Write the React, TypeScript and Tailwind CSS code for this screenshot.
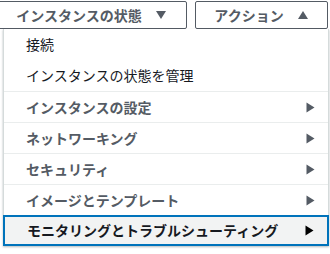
import React from "react";

const Caret = ({ up = false, className = "" }: { up?: boolean; className?: string }) => (
  <svg width="12" height="10" viewBox="0 0 12 10" className={className}>
    {up ? <path d="M6 1 L11 9 L1 9 Z" fill="currentColor" /> : <path d="M1 1 L11 1 L6 9 Z" fill="currentColor" />}
  </svg>
);

const RightArrow = ({ className = "" }: { className?: string }) => (
  <svg width="9" height="11" viewBox="0 0 9 11" className={className}>
    <path d="M0.5 0.5 L8.5 5.5 L0.5 10.5 Z" fill="currentColor" />
  </svg>
);

const App = () => {
  const subMenus = [
    "インスタンスの設定",
    "ネットワーキング",
    "セキュリティ",
    "イメージとテンプレート",
  ];

  return (
    <div
      className="relative h-[254px] w-[330px] overflow-hidden bg-white"
      style={{ fontFamily: '"Noto Sans CJK JP", "Noto Sans", sans-serif' }}
    >
      {/* Background table peeking out on the left */}
      <div className="absolute left-[-8px] top-[75px] flex flex-col text-[12px] leading-[14px] text-[#16191f]">
        <span className="h-[22px]">.</span>
        <span className="h-[38px]">2</span>
        <span className="h-[22px]">4</span>
        <span className="h-[24px]">2</span>
        <span className="h-[20px]">1</span>
      </div>

      {/* Buttons */}
      <div className="flex gap-[8px] pt-px">
        <button className="ml-[-4px] flex h-[28px] w-[191px] items-center justify-center gap-[13px] rounded-[2px] border border-[#545b64] bg-white text-[14px] font-bold text-[#545b64]">
          <span>インスタンスの状態</span>
          <Caret />
        </button>
        <button className="flex h-[28px] w-[133px] items-center justify-center gap-[13px] rounded-[2px] border border-[#545b64] bg-white text-[14px] font-bold text-[#545b64]">
          <span>アクション</span>
          <Caret up />
        </button>
      </div>

      {/* Dropdown menu */}
      <div className="absolute left-[3px] top-[29px] w-[326px] border-x border-b border-[#d5dbdb] bg-white shadow-[0_1px_2px_rgba(0,28,36,0.3)]">
        <div className="flex h-[31px] items-center pl-[22px] text-[14px] text-[#16191f]">接続</div>
        <div className="flex h-[31px] items-center pl-[22px] text-[14px] text-[#16191f]">
          インスタンスの状態を管理
        </div>
        {subMenus.map((label) => (
          <div
            key={label}
            className="flex h-[31px] items-center justify-between border-t border-[#eaeded] pl-[22px] pr-[13px] text-[14px] font-bold text-[#545b64]"
          >
            <span>{label}</span>
            <RightArrow />
          </div>
        ))}
        <div className="-mx-px -mb-px flex h-[31px] items-center justify-between border-2 border-[#0073bb] bg-[#f2f3f3] pl-[22px] pr-[13px] text-[14px] font-bold text-[#16191f]">
          <span>モニタリングとトラブルシューティング</span>
          <RightArrow className="text-black" />
        </div>
      </div>
    </div>
  );
};

export default App;
